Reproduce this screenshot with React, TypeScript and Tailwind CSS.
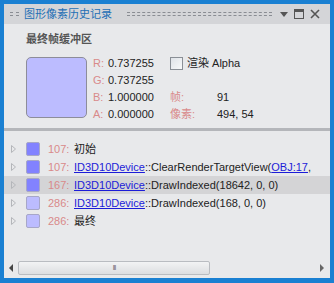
import React from "react";

const rows = [
  { id: 107, color: "bg-[#8282ff]", text: <span>初始</span> },
  {
    id: 107,
    color: "bg-[#8282ff]",
    text: (
      <span>
        <a className="text-[#1c1cd8] underline">ID3D10Device</a>::ClearRenderTargetView(
        <a className="text-[#1c1cd8] underline">OBJ:17</a>,
      </span>
    ),
  },
  {
    id: 167,
    color: "bg-[#8282ff]",
    selected: true,
    text: (
      <span>
        <a className="text-[#1c1cd8] underline">ID3D10Device</a>::DrawIndexed(18642, 0, 0)
      </span>
    ),
  },
  {
    id: 286,
    color: "bg-[#bcbcff]",
    text: (
      <span>
        <a className="text-[#1c1cd8] underline">ID3D10Device</a>::DrawIndexed(168, 0, 0)
      </span>
    ),
  },
  { id: 286, color: "bg-[#bcbcff]", text: <span>最终</span> },
];

function Dashes() {
  return (
    <div className="flex flex-col gap-[2px]">
      <div className="border-t border-dashed border-[#8a8d93]" />
      <div className="border-t border-dashed border-[#8a8d93]" />
    </div>
  );
}

export default function App() {
  return (
    <div
      className="w-[334px] h-[283px] bg-[#1a80d2] p-[4px] pb-[5px] overflow-hidden text-[11px]"
      style={{ fontFamily: '"Liberation Sans", "Noto Sans CJK SC", sans-serif' }}
    >
      <div className="h-full flex flex-col bg-[#e8e9eb]">
        {/* title bar */}
        <div className="h-[20px] bg-[#d4d5d8] flex items-center pl-[6px] pr-[10px] shrink-0">
          <div className="w-[9px]">
            <Dashes />
          </div>
          <span className="ml-[5px] text-[11px] text-[#1e6fb5] leading-none">图形像素历史记录</span>
          <div className="flex-1 ml-[15px] mr-[8px]">
            <Dashes />
          </div>
          <svg width="8" height="5" viewBox="0 0 8 5" className="mt-[1px]">
            <path d="M0 0 H8 L4 5 Z" fill="#555" />
          </svg>
          <svg width="10" height="10" viewBox="0 0 10 10" className="ml-[6px]">
            <rect x="0.5" y="0.5" width="9" height="9" fill="none" stroke="#555" />
            <rect x="1" y="1" width="8" height="2" fill="#555" />
          </svg>
          <svg width="10" height="10" viewBox="0 0 10 10" className="ml-[6px]">
            <path d="M1 1 L9 9 M9 1 L1 9" stroke="#555" strokeWidth="1.6" />
          </svg>
        </div>

        {/* frame buffer section */}
        <div className="h-[104px] shrink-0 pl-[22px] pt-[8px]">
          <div className="text-[11px] font-bold text-[#555] leading-[14px]">最终帧缓冲区</div>
          <div className="flex mt-[11px]">
            <div className="w-[61px] h-[61px] rounded-[5px] bg-[#bcbcff] border border-[#8d8d9a]" />
            <div className="ml-[6px] w-[77px] -mt-[2px] flex flex-col leading-[17px]">
              {[
                ["R:", "0.737255"],
                ["G:", "0.737255"],
                ["B:", "1.000000"],
                ["A:", "0.000000"],
              ].map(([k, v]) => (
                <div key={k} className="flex">
                  <span className="w-[15px] text-[#d98a8a]">{k}</span>
                  <span className="text-[#222]">{v}</span>
                </div>
              ))}
            </div>
            <div className="-mt-[2px] flex flex-col">
              <div className="flex items-center h-[16px]">
                <div className="w-[13px] h-[13px] border border-[#8a8f96] bg-gradient-to-br from-[#dfe3e8] to-[#f8f9fa]" />
                <span className="ml-[4px] text-[#222]">渲染 Alpha</span>
              </div>
              <div className="mt-[18px] flex leading-[17px]">
                <span className="w-[47px] text-[#d98a8a]">帧:</span>
                <span className="text-[#222]">91</span>
              </div>
              <div className="flex leading-[17px]">
                <span className="w-[47px] text-[#d98a8a]">像素:</span>
                <span className="text-[#222]">494, 54</span>
              </div>
            </div>
          </div>
        </div>

        {/* splitter */}
        <div className="h-[3px] bg-[#b4b6ba] shrink-0" />

        {/* list */}
        <div className="flex-1 pt-[9px] overflow-hidden">
          {rows.map((r, i) => (
            <div
              key={i}
              className={`h-[18px] flex items-center whitespace-nowrap ${r.selected ? "bg-[#d4d4d6]" : ""}`}
            >
              <svg width="5" height="8" viewBox="0 0 5 8" className="ml-[7px]">
                <path d="M0.5 0.5 L4.5 4 L0.5 7.5 Z" fill="none" stroke="#b4b6ba" />
              </svg>
              <div className={`ml-[10px] w-[14px] h-[14px] rounded-[2px] ${r.color} border border-[#a7a7c8]`} />
              <span className="ml-[8px] text-[#d98a8a] w-[26px]">{r.id}:</span>
              <span className="text-[#222]">{r.text}</span>
            </div>
          ))}
        </div>

        {/* horizontal scrollbar */}
        <div className="h-[16px] shrink-0 flex items-center mb-[2px]">
          <svg width="5" height="8" viewBox="0 0 5 8" className="ml-[5px]">
            <path d="M4 0 L0 4 L4 8 Z" fill="#444" />
          </svg>
          <div className="ml-[4px] w-[192px] h-[14px] rounded-[2px] border border-[#b9bcc1] bg-gradient-to-b from-[#f2f3f4] to-[#dcdee1] flex items-center justify-center">
            <span className="text-[8px] text-[#777] tracking-[-1px] leading-none">lll</span>
          </div>
          <div className="flex-1" />
          <svg width="5" height="8" viewBox="0 0 5 8" className="mr-[6px]">
            <path d="M1 0 L5 4 L1 8 Z" fill="#666" />
          </svg>
        </div>
      </div>
    </div>
  );
}
